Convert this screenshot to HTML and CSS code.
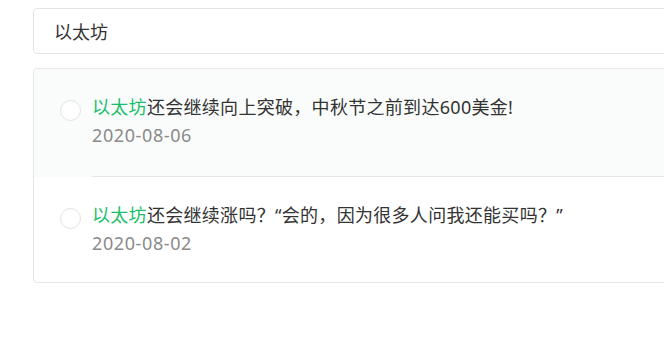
FILE: index.html
```html
<!DOCTYPE html>
<html lang="zh-CN">
<head>
    <meta charset="UTF-8">
    <meta name="viewport" content="width=device-width, initial-scale=1.0">
    <title>搜索结果</title>
    <link rel="stylesheet" href="styles.css">
</head>
<body>
    <div class="page">
        <!-- 搜索框 -->
        <div class="search">
            <input class="search-input" type="text" value="以太坊">
        </div>

        <!-- 结果列表 -->
        <div class="result-list">
            <div class="result-item active">
                <span class="radio"></span>
                <div class="result-body">
                    <div class="result-title"><span class="keyword">以太坊</span>还会继续向上突破，中秋节之前到达600美金!</div>
                    <div class="result-date">2020-08-06</div>
                </div>
            </div>
            <div class="result-item">
                <span class="radio"></span>
                <div class="result-body">
                    <div class="result-title"><span class="keyword">以太坊</span>还会继续涨吗？“会的，因为很多人问我还能买吗？”</div>
                    <div class="result-date">2020-08-02</div>
                </div>
            </div>
        </div>
    </div>
</body>
</html>
```

FILE: styles.css
```css
* {
    margin: 0;
    padding: 0;
    box-sizing: border-box;
}

body {
    font-family: "Noto Sans", "Noto Sans CJK SC", sans-serif;
    color: #333;
    background: #fff;
    overflow: hidden;
}

.page {
    padding: 8px 0 0 33px;
    width: 760px;
}

.search {
    height: 46px;
    border: 1px solid #e3e3e3;
    border-radius: 4px;
    background: #fff;
}

.search-input {
    width: 100%;
    height: 100%;
    border: none;
    outline: none;
    background: transparent;
    padding: 0 20px;
    font-family: inherit;
    font-size: 18px;
    color: #333;
}

.result-list {
    margin-top: 14px;
    border: 1px solid #e6e6e6;
    border-radius: 4px;
    overflow: hidden;
}

.result-item {
    display: flex;
    align-items: flex-start;
    padding-left: 26px;
}

.result-item.active {
    background: #fafcfb;
}

.radio {
    flex: none;
    width: 21px;
    height: 21px;
    margin-top: 31px;
    margin-right: 11px;
    border: 1px solid #e2e2e2;
    border-radius: 50%;
    background: #fff;
}

.result-body {
    flex: 1;
    padding: 24px 0 27px;
    border-bottom: 1px solid #e6e6e6;
    line-height: 28px;
    font-size: 18px;
}

.result-item:last-child .result-body {
    padding-bottom: 25px;
    border-bottom: none;
}

.result-title {
    color: #333;
    white-space: nowrap;
    letter-spacing: 0.3px;
}

.keyword {
    color: #19be6b;
}

.result-date {
    color: #8a8a8a;
    letter-spacing: 0.6px;
}
```
